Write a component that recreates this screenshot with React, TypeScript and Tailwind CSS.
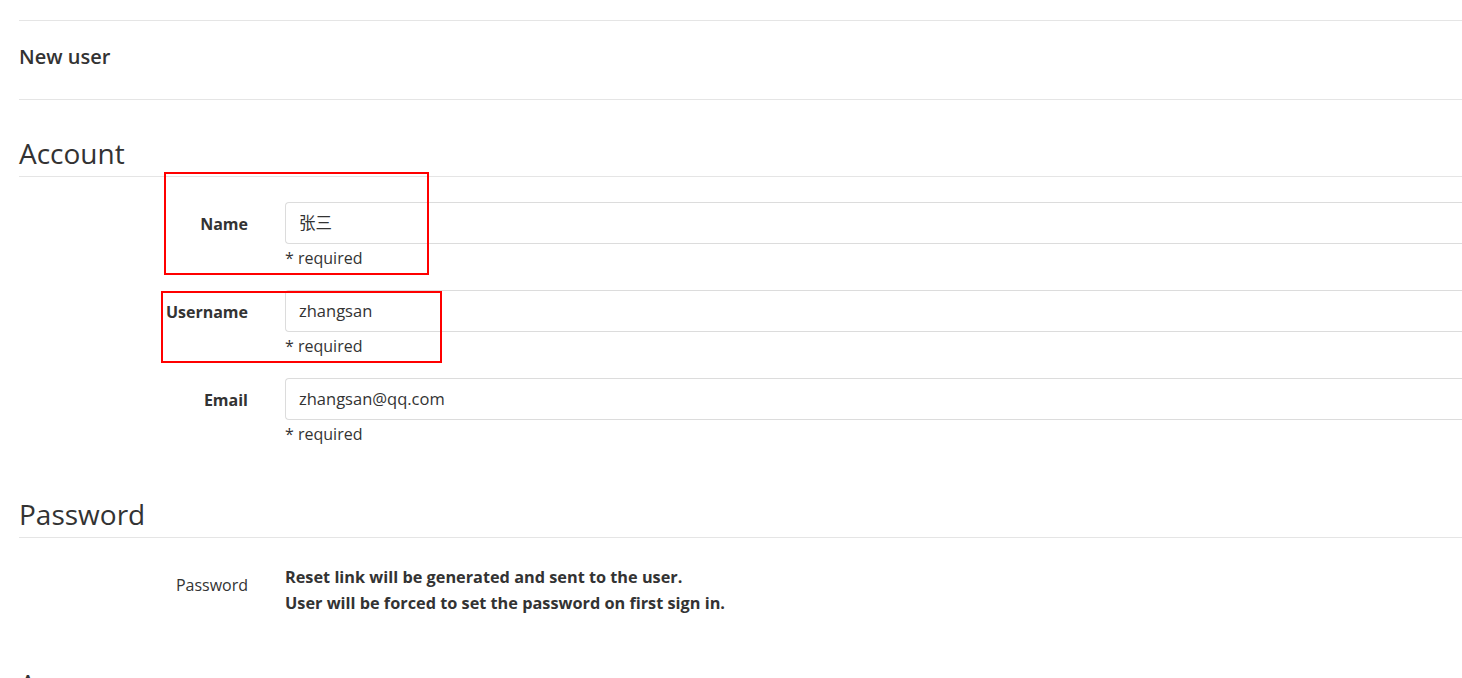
import React from "react";

const font = "font-['Open_Sans','Noto_Sans_CJK_SC',sans-serif]";

function Field({ label, value }: { label: string; value: string }) {
  return (
    <div className="flex mb-[20px]">
      <label className="w-[229px] shrink-0 text-right text-[16px] font-bold leading-[42px] pt-[1px]">{label}</label>
      <div className="ml-[37px] flex-1">
        <div className="h-[42px] border border-[#dcdcdc] border-r-0 rounded-l-[4px] pl-[13px] flex items-center text-[16.5px]">
          {value}
        </div>
        <div className="mt-[2px] text-[16px] leading-[24px]">* required</div>
      </div>
    </div>
  );
}

export default function App() {
  return (
    <div className={`relative min-h-screen w-full bg-white pl-[19px] pt-[20px] text-[#333] ${font}`}>
      <div className="h-[80px] border-t border-b border-[#e5e5e5] flex items-center pb-[6px]">
        <span className="text-[20px] font-semibold">New user</span>
      </div>

      <h3 className="mt-[36px] text-[28px] leading-[34px] pb-[6px] border-b border-[#e5e5e5] font-normal">Account</h3>
      <div className="mt-[25px]">
        <Field label="Name" value="张三" />
        <Field label="Username" value="zhangsan" />
        <Field label="Email" value="zhangsan@qq.com" />
      </div>

      <h3 className="mt-[51px] text-[28px] leading-[34px] pb-[6px] border-b border-[#e5e5e5] font-normal">Password</h3>
      <div className="mt-[26px] flex">
        <label className="w-[229px] shrink-0 text-right text-[16px] leading-[24px] pt-[9px]">Password</label>
        <div className="ml-[37px] text-[16.3px] font-bold leading-[26px]">
          <div>Reset link will be generated and sent to the user.</div>
          <div>User will be forced to set the password on first sign in.</div>
        </div>
      </div>

      <h3 className="mt-[51px] text-[28px] leading-[34px] pb-[6px] border-b border-[#e5e5e5] font-normal">Access</h3>

      <div className="absolute left-[164px] top-[172px] w-[265px] h-[103px] border-2 border-[#ff0000]" />
      <div className="absolute left-[161px] top-[291px] w-[281px] h-[72px] border-2 border-[#ff0000]" />
    </div>
  );
}
